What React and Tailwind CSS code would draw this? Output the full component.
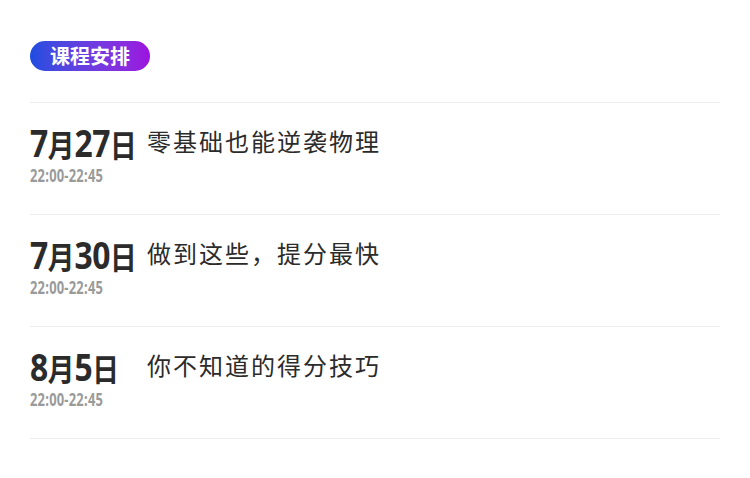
import React from "react";

const items = [
  { date: ["7", "月", "27", "日"], title: "零基础也能逆袭物理" },
  { date: ["7", "月", "30", "日"], title: "做到这些，提分最快" },
  { date: ["8", "月", "5", "日"], title: "你不知道的得分技巧" },
];

export default function App() {
  return (
    <div className="w-[750px] h-[478px] bg-white px-[30px] pt-[41px]" style={{ fontFamily: '"Noto Sans CJK SC", sans-serif' }}>
      <div className="flex h-[30px] w-[120px] items-center justify-center rounded-full bg-gradient-to-r from-[#1a4de0] to-[#9c10df] text-[20px] font-bold leading-none text-white">
        课程安排
      </div>
      <div className="mt-[31px] border-t border-[#ececec]">
        {items.map((it, i) => (
          <div key={i} className="flex h-[112px] items-start border-b border-[#ececec] pt-[21px]">
            <div className="w-[117px] shrink-0">
              <div className="flex h-[36px] origin-left scale-x-[0.86] items-baseline whitespace-nowrap font-bold leading-none text-[#2b2b2b]">
                {it.date.map((p, j) =>
                  j % 2 === 0 ? (
                    <span key={j} className="text-[37px] tracking-[-0.5px]" style={{ fontFamily: '"Open Sans", "Noto Sans", sans-serif' }}>{p}</span>
                  ) : (
                    <span key={j} className="text-[31px]">{p}</span>
                  )
                )}
              </div>
              <div className="mt-[7px] origin-left scale-x-[0.76] whitespace-nowrap text-[17px] font-bold leading-none tracking-[0.3px] text-[#9a9a9a]" style={{ fontFamily: '"Open Sans", "Noto Sans", sans-serif' }}>
                22:00-22:45
              </div>
            </div>
            <div className="pt-[5px] text-[24px] leading-none tracking-[2px] text-[#2b2b2b]">{it.title}</div>
          </div>
        ))}
      </div>
    </div>
  );
}
